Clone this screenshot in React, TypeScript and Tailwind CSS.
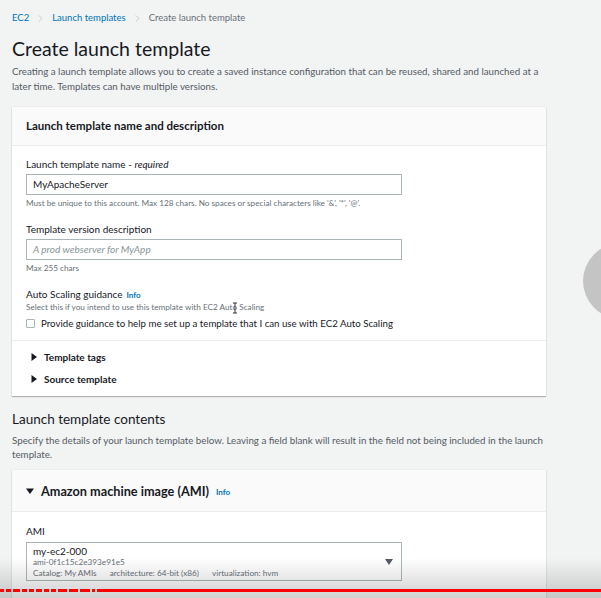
import { ChevronRight } from 'lucide-react'

const font = "font-['Lato',sans-serif]"

function Caret({ open = false }: { open?: boolean }) {
  return (
    <svg width="8" height="8" viewBox="0 0 8 8" className="shrink-0 fill-[#16191f]">
      {open ? <polygon points="0,1.5 8,1.5 4,7" /> : <polygon points="1.5,0 7,4 1.5,8" />}
    </svg>
  )
}

export default function App() {
  return (
    <div className={`relative h-[598px] w-[601px] overflow-hidden bg-[#f2f3f3] text-[#16191f] ${font}`}>
      <div className="pl-[12px] pr-[40px]">
        {/* breadcrumb */}
        <div className="flex items-center gap-[6px] pt-[12px] text-[9.5px] leading-[12px]">
          <span className="text-[#0073bb]">EC2</span>
          <ChevronRight className="h-[11px] w-[11px] text-[#aab7b8]" strokeWidth={1.5} />
          <span className="text-[#0073bb]">Launch templates</span>
          <ChevronRight className="h-[11px] w-[11px] text-[#aab7b8]" strokeWidth={1.5} />
          <span className="text-[#687078]">Create launch template</span>
        </div>

        <h1 className="mt-[13px] text-[19.5px] leading-[24px] font-normal">Create launch template</h1>
        <p className="mt-[3px] w-[534px] text-[9.75px] leading-[15px] text-[#545b64]">
          Creating a launch template allows you to create a saved instance configuration that can be reused, shared and launched at a
          later time. Templates can have multiple versions.
        </p>

        {/* card 1 */}
        <div className="mt-[13px] w-[534px] bg-white shadow-[0_1px_1px_rgba(0,0,0,0.25),0_0_1px_rgba(0,0,0,0.15)]">
          <div className="flex h-[39px] items-center border-b border-[#eaeded] bg-[#fafafa] px-[14px]">
            <h2 className="text-[11.5px] font-bold leading-[14px]">Launch template name and description</h2>
          </div>
          <div className="px-[14px] pb-[10px]">
            <div className="pt-[11px] text-[10px] leading-[14px]">
              Launch template name - <i>required</i>
            </div>
            <div className="mt-[3px] flex h-[21px] w-[376px] items-center border border-[#aab7b8] px-[6px] text-[10px]">
              MyApacheServer
            </div>
            <div className="mt-[3px] text-[8.2px] leading-[10px] text-[#687078]">
              Must be unique to this account. Max 128 chars. No spaces or special characters like '&amp;', '*', '@'.
            </div>

            <div className="mt-[14px] text-[10px] leading-[14px]">Template version description</div>
            <div className="mt-[3px] flex h-[21px] w-[376px] items-center border border-[#aab7b8] px-[6px] text-[10px] italic text-[#879596]">
              A prod webserver for MyApp
            </div>
            <div className="mt-[3px] text-[8.2px] leading-[10px] text-[#687078]">Max 255 chars</div>

            <div className="mt-[14px] flex items-baseline gap-[4px] text-[10px] leading-[14px]">
              Auto Scaling guidance
              <span className="text-[8px] font-bold text-[#0073bb]">Info</span>
            </div>
            <div className="relative text-[8.2px] leading-[10px] text-[#687078]">
              Select this if you intend to use this template with EC2 Auto Scaling
              <svg width="6" height="12" viewBox="0 0 6 12" className="absolute left-[206px] top-[0px] stroke-[#333]">
                <path d="M1 1h4M3 1v10M1 11h4" fill="none" strokeWidth="1" />
              </svg>
            </div>
            <label className="mt-[4px] flex items-center gap-[6px] text-[9.7px] leading-[14px]">
              <span className="h-[9px] w-[9px] rounded-[1px] border border-[#aab7b8] bg-white" />
              Provide guidance to help me set up a template that I can use with EC2 Auto Scaling
            </label>
          </div>
          <div className="border-t border-[#eaeded] px-[18px] pt-[9px] pb-[10px]">
            <div className="flex items-center gap-[6px] text-[10px] font-bold leading-[14px]">
              <Caret /> Template tags
            </div>
            <div className="mt-[8px] flex items-center gap-[6px] text-[10px] font-bold leading-[14px]">
              <Caret /> Source template
            </div>
          </div>
        </div>

        <h2 className="mt-[15px] text-[13.5px] leading-[16px] font-normal">Launch template contents</h2>
        <p className="mt-[6px] w-[540px] text-[9.75px] leading-[14px] text-[#545b64]">
          Specify the details of your launch template below. Leaving a field blank will result in the field not being included in the launch
          template.
        </p>

        {/* card 2 */}
        <div className="mt-[9px] w-[534px] bg-white shadow-[0_1px_1px_rgba(0,0,0,0.25),0_0_1px_rgba(0,0,0,0.15)]">
          <div className="flex h-[42px] items-center gap-[7px] border-b border-[#eaeded] bg-[#fafafa] px-[14px]">
            <Caret open />
            <h2 className="text-[12.7px] font-bold leading-[16px]">Amazon machine image (AMI)</h2>
            <span className="mt-[2px] text-[8px] font-bold text-[#0073bb]">Info</span>
          </div>
          <div className="px-[14px] pb-[20px]">
            <div className="pt-[12px] text-[10px] leading-[14px]">AMI</div>
            <div className="mt-[4px] flex h-[39px] w-[376px] items-center justify-between border border-[#aab7b8] pl-[6px] pr-[8px]">
              <div className="flex flex-col">
                <span className="text-[10px] leading-[12px]">my-ec2-000</span>
                <span className="text-[8.2px] leading-[11px] text-[#687078]">ami-0f1c15c2e393e91e5</span>
                <span className="flex gap-[13px] text-[8.2px] leading-[11px] text-[#687078]">
                  <span>Catalog: My AMIs</span>
                  <span>architecture: 64-bit (x86)</span>
                  <span>virtualization: hvm</span>
                </span>
              </div>
              <svg width="8" height="6" viewBox="0 0 8 6" className="fill-[#545b64]">
                <polygon points="0,0 8,0 4,6" />
              </svg>
            </div>
          </div>
        </div>
      </div>

      {/* video overlay: side button, bottom gradient, progress bar */}
      <div className="absolute left-[583px] top-[243px] h-[76px] w-[76px] rounded-full bg-[#c4c4c4]" />
      <div className="absolute bottom-0 left-0 h-[40px] w-full bg-gradient-to-b from-transparent to-[rgba(0,0,0,0.18)]" />
      <div className="absolute left-0 top-[589px] flex h-[3px] w-full gap-[2px]">
        {[4, 5, 7, 5, 5, 6, 5, 5, 9, 9, 10, 3].map((w, i) => (
          <div key={i} className="h-full bg-[#ff0000]" style={{ width: w }} />
        ))}
        <div className="h-full flex-1 bg-[#ff0000]" />
      </div>
    </div>
  )
}
